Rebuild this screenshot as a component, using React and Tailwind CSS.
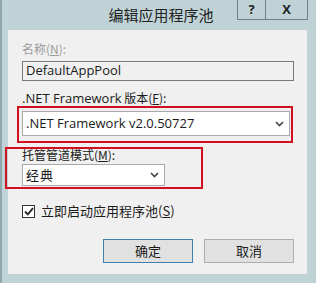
import React from "react";

const cjk = { fontFamily: '"Noto Sans CJK SC", "Noto Sans", sans-serif' };
const lat = { fontFamily: '"Open Sans", "Noto Sans CJK SC", sans-serif' };

function Chevron() {
  return (
    <svg width="9" height="6" viewBox="0 0 9 6" className="shrink-0">
      <path d="M1 1 L4.5 4.5 L8 1" fill="none" stroke="#444" strokeWidth="1.6" />
    </svg>
  );
}

export default function App() {
  return (
    <div className="w-[316px] h-[283px] bg-[#bfd3d6] border-l-2 border-[#8fa6aa] flex flex-col overflow-hidden relative" style={cjk}>
      <div className="h-[30px] relative shrink-0">
        <div className="absolute left-0 right-0 top-[5px] text-center text-[15px] leading-[20px] text-[#222] pl-[4px]">编辑应用程序池</div>
        <div className="absolute top-0 left-[235px] flex h-[20px] border border-t-0 border-[#6f8387]">
          <div className="w-[27px] flex items-center justify-center text-[13px] font-bold text-[#222]" style={lat}>?</div>
          <div className="w-[42px] border-l border-[#6f8387] flex items-center justify-center text-[13px] font-bold text-[#222]" style={lat}>X</div>
        </div>
      </div>
      <div className="ml-[6px] mr-[9px] mb-[9px] flex-1 bg-[#f0f0f0] flex flex-col pt-[11px] pl-[14px] pr-[13px] text-[12px] text-[#1a1a1a]">
        <div className="h-[16px] leading-[16px] text-[#9b9b9b]">名称(<span className="underline">N</span>):</div>
        <div className="mt-[4px] h-[20px] border border-[#7a7a7a] bg-[#f0f0f0] flex items-center px-[3px] text-[13px]" style={lat}>DefaultAppPool</div>
        <div className="mt-[9px] h-[16px] leading-[16px]" ><span style={lat} className="text-[13px]">.NET Framework</span> 版本(<span className="underline">F</span>):</div>
        <div className="-ml-[5px] mt-[0px] w-[276px] h-[37px] border-2 border-[#d0101e] pl-[3px] pr-[1px] py-[3px]">
          <div className="h-[25px] border border-[#a9a9a9] bg-white flex items-center justify-between pl-[3px] pr-[5px]">
            <span className="text-[13px]" style={lat}>.NET Framework v2.0.50727</span>
            <Chevron />
          </div>
        </div>
        <div className="-ml-[17px] mt-[4px] w-[198px] h-[42px] border-2 border-[#d0101e] pl-[15px] pr-[36px] flex flex-col">
          <div className="h-[15px] leading-[14px] mt-[-1px]">托管管道模式(<span className="underline">M</span>):</div>
          <div className="mt-[1px] h-[22px] border border-[#a9a9a9] bg-white flex items-center justify-between pl-[3px] pr-[5px]">
            <span className="text-[13px] tracking-[1px]">经典</span>
            <Chevron />
          </div>
        </div>
        <div className="mt-[15px] flex items-center h-[14px]">
          <div className="w-[13px] h-[13px] border border-[#333] bg-white flex items-center justify-center">
            <svg width="10" height="9" viewBox="0 0 10 9">
              <path d="M1 4.5 L3.8 7.3 L9 1.2" fill="none" stroke="#222" strokeWidth="1.8" />
            </svg>
          </div>
          <span className="ml-[6px] text-[13px]">立即启动应用程序池(<span className="underline">S</span>)</span>
        </div>
        <div className="mt-[21px] flex justify-end gap-[11px]">
          <div className="w-[90px] h-[24px] border border-[#3c7fb1] bg-[#e1e1e1] flex items-center justify-center text-[13px]">确定</div>
          <div className="w-[90px] h-[24px] border border-[#adadad] bg-[#e1e1e1] flex items-center justify-center text-[13px]">取消</div>
        </div>
      </div>
    </div>
  );
}
